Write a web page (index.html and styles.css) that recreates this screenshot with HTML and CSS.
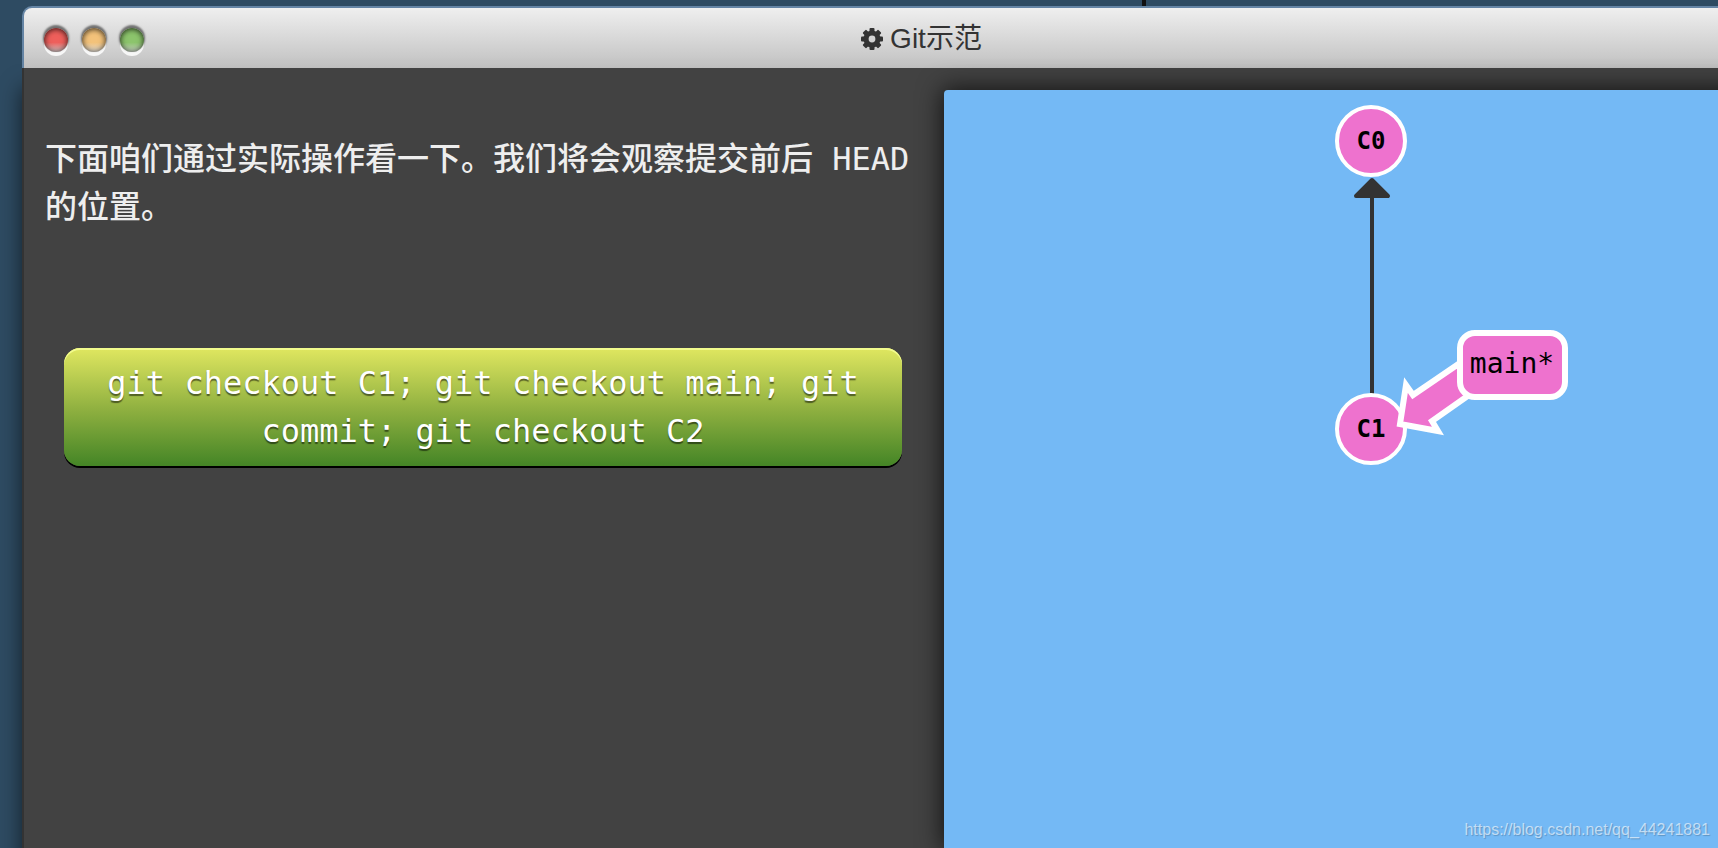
FILE: index.html
```
<!DOCTYPE html>
<html lang="zh-CN">
<head>
<meta charset="utf-8">
<title>Git示范</title>
<link rel="stylesheet" href="styles.css">
</head>
<body>
<div class="backdrop"><span class="backdrop-rule"></span></div>
<main class="window">
  <header class="titlebar">
    <div class="lights">
      <button class="light light-close" type="button" aria-label="关闭"></button>
      <button class="light light-min" type="button" aria-label="最小化"></button>
      <button class="light light-max" type="button" aria-label="最大化"></button>
    </div>
    <h1 class="title">
      <svg class="gear" viewBox="0 0 24 24" aria-hidden="true">
        <g fill="#333">
          <g id="teeth">
            <rect x="9.5" y="1" width="5" height="22" rx="1"/>
            <rect x="1" y="9.5" width="22" height="5" rx="1"/>
          </g>
          <use href="#teeth" transform="rotate(45 12 12)"/>
          <circle cx="12" cy="12" r="8.6"/>
        </g>
        <circle cx="12" cy="12" r="3.4" fill="#d3d3d3"/>
      </svg>
      <span>Git示范</span>
    </h1>
  </header>
  <div class="content">
    <section class="lesson">
      <p class="intro">下面咱们通过实际操作看一下。我们将会观察提交前后 HEAD 的位置。</p>
      <button class="command" type="button">git checkout C1; git checkout main; git commit; git checkout C2</button>
    </section>
    <section class="canvas">
      <svg class="tree" width="400" height="400" viewBox="0 0 400 400" role="img" aria-label="C1 → C0, main*">
        <path class="edge" d="M201 106V304"/>
        <path class="edge-head" d="M201 90L217 106H185Z"/>
        <circle class="commit" cx="200" cy="51" r="34"/>
        <text class="commit-id" x="200" y="59">C0</text>
        <circle class="commit" cx="200" cy="339" r="34"/>
        <text class="commit-id" x="200" y="347">C1</text>
        <path class="pointer" d="M286 275L242 305L235 295L229 334L267 341L261 331L308 298Z"/>
        <rect class="branch" x="289" y="243" width="105" height="64" rx="15"/>
        <text class="branch-name" x="341" y="283">main*</text>
      </svg>
    </section>
  </div>
</main>
<a class="watermark" href="https://blog.csdn.net/qq_44241881">https://blog.csdn.net/qq_44241881</a>
</body>
</html>
```
FILE: styles.css
```
* {
  box-sizing: border-box;
}

body {
  margin: 0;
  min-height: 100vh;
  display: flex;
  flex-direction: column;
  overflow: hidden;
  background: #2e4b62;
  font-family: "DejaVu Sans Mono", "Noto Sans CJK SC", monospace;
}

.backdrop {
  display: flex;
  height: 6px;
  padding-left: calc(66% + 8px);
}

.backdrop-rule {
  width: 4px;
  background: #111;
}

/* The window is wider than the viewport and runs off its right edge. */
.window {
  flex: 1;
  display: flex;
  flex-direction: column;
  margin-left: 22px;
  margin-right: -102px;
  border-radius: 10px 10px 0 0;
}

.titlebar {
  display: grid;
  grid-template-columns: 1fr auto 1fr;
  align-items: center;
  height: 62px;
  padding: 2px 20px 0;
  border: 2px solid #6484a4;
  border-bottom: 0;
  border-radius: 10px 10px 0 0;
  background: linear-gradient(#efefef, #c1c1c1);
}

.lights {
  display: flex;
  gap: 14px;
  padding-top: 2px;
}

.light {
  width: 24px;
  height: 24px;
  padding: 0;
  border: 0;
  border-radius: 50%;
  box-shadow:
    inset 0 0 6px rgba(0, 0, 0, 0.6),
    inset 0 2px 4px rgba(0, 0, 0, 0.3),
    0 -2px 2px 1px rgba(0, 0, 0, 0.5),
    0 4px 0 #f7f7f7;
}

.light-close {
  background: linear-gradient(#ee5f5b 60%, #d8c8c8);
}

.light-min {
  background: linear-gradient(#f3c27a 60%, #e6e0d6);
}

.light-max {
  background: linear-gradient(#8cc46c 60%, #ccd6c8);
}

.title {
  display: flex;
  align-items: center;
  gap: 6px;
  margin: 0;
  color: #333;
  font: 400 28px/40px "Liberation Sans", "Noto Sans CJK SC", sans-serif;
}

.gear {
  width: 24px;
  height: 24px;
}

.content {
  flex: 1;
  display: grid;
  grid-template-columns: 1fr 1fr;
  padding-top: 22px;
  border-left: 2px solid #333;
  background: #424242;
  box-shadow: 0 20px 20px rgba(0, 0, 0, 0.6);
}

.lesson {
  display: flex;
  flex-direction: column;
  padding: 45px 0 0 21px;
}

.intro {
  margin: 0;
  color: #eee;
  font-size: 32px;
  font-weight: 500;
  line-height: 48px;
}

.command {
  margin: 117px 20px 0 19px;
  padding: 11px 40px;
  border: 0;
  border-radius: 16px;
  background: linear-gradient(#e0e760, #8fb040 52%, #448526);
  box-shadow: inset 0 2px 0 #f2fb8e, 0 2px 0 #000;
  color: #fff;
  font: inherit;
  font-size: 32px;
  line-height: 48px;
  text-align: center;
  text-shadow: 0 2px 1px rgba(0, 0, 0, 0.5);
}

.canvas {
  display: flex;
  justify-content: center;
  align-items: flex-start;
  margin: 0 22px;
  border-radius: 4px 4px 0 0;
  background: #74b9f5;
  box-shadow: 0 0 24px 2px rgba(0, 0, 0, 0.7);
}

.tree {
  overflow: visible;
}

.edge {
  stroke: #333;
  stroke-width: 4;
}

.edge-head {
  fill: #333;
  stroke: #333;
  stroke-width: 4;
  stroke-linejoin: round;
}

.commit {
  fill: #ee72ce;
  stroke: #fff;
  stroke-width: 4;
}

.commit-id {
  font-size: 24px;
  font-weight: 700;
  text-anchor: middle;
}

.pointer,
.branch {
  fill: #ee72ce;
  stroke: #fff;
  stroke-width: 6;
}

.branch-name {
  font-size: 28px;
  text-anchor: middle;
}

.watermark {
  position: absolute;
  right: 8px;
  bottom: 8px;
  color: rgba(255, 255, 255, 0.6);
  font: 16px/20px "Liberation Sans", sans-serif;
  text-decoration: none;
  text-shadow: 1px 1px 1px rgba(0, 0, 0, 0.2);
}
```
